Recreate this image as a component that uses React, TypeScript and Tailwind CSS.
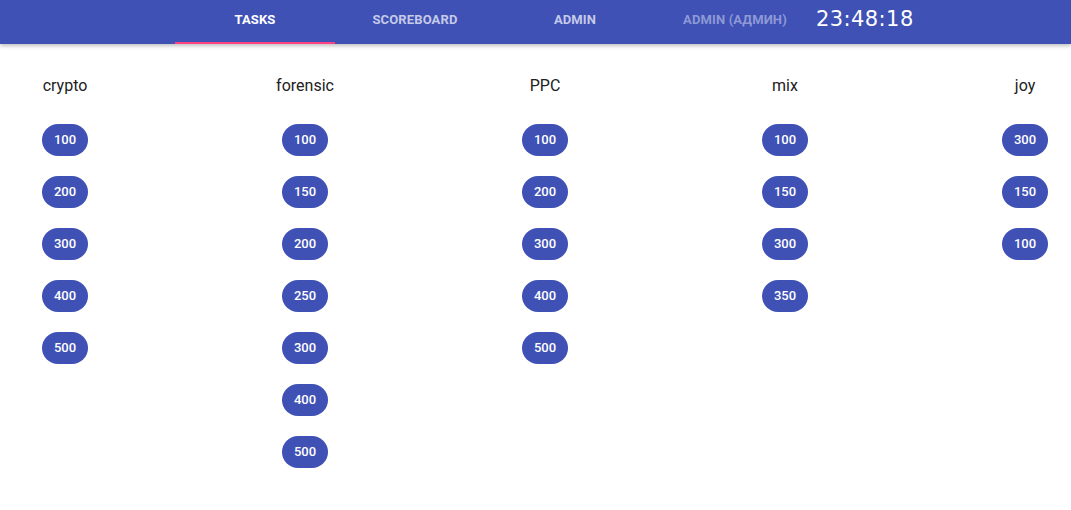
import React from 'react';

const CATEGORIES: { name: string; tasks: number[] }[] = [
  { name: 'crypto', tasks: [100, 200, 300, 400, 500] },
  { name: 'forensic', tasks: [100, 150, 200, 250, 300, 400, 500] },
  { name: 'PPC', tasks: [100, 200, 300, 400, 500] },
  { name: 'mix', tasks: [100, 150, 300, 350] },
  { name: 'joy', tasks: [300, 150, 100] },
];

const TABS = [
  { label: 'TASKS', active: true },
  { label: 'SCOREBOARD' },
  { label: 'ADMIN' },
  { label: 'ADMIN (АДМИН)', muted: true },
];

export default function App() {
  return (
    <div className="min-h-[510px] bg-white font-['Roboto',sans-serif]">
      <header className="h-[44px] bg-[#3f51b5] shadow-[0_2px_4px_rgba(0,0,0,0.25)] flex items-stretch pl-[175px]">
        {TABS.map((t) => (
          <div key={t.label} className="relative w-[160px] flex items-center justify-center pb-[4px]">
            <span
              className={`text-[13px] font-bold tracking-[0.01em] ${
                t.active ? 'text-white' : t.muted ? 'text-[#8e99d6]' : 'text-[#c5cae9]'
              }`}
            >
              {t.label}
            </span>
            {t.active && <div className="absolute left-0 right-0 bottom-0 h-[2px] bg-[#ff4081]" />}
          </div>
        ))}
        {/* clock */}
        <div className="flex items-center pb-[5px] pl-[1px] text-white text-[21px] leading-none font-['DejaVu_Sans',sans-serif] font-normal tracking-[0.02em]">
          23:48:18
        </div>
      </header>

      <main className="grid grid-cols-[repeat(5,46px)] gap-x-[194px] pl-[42px] pt-[30px] items-start">
        {CATEGORIES.map((c) => (
          <div key={c.name} className="flex flex-col items-center">
            <div className="h-[24px] leading-[24px] text-[16px] text-[#212121] whitespace-nowrap">{c.name}</div>
            <div className="flex flex-col gap-[20px] mt-[26px]">
              {c.tasks.map((p, i) => (
                <button
                  key={i}
                  className="w-[46px] h-[32px] rounded-full bg-[#3f51b5] text-white text-[13px] font-medium flex items-center justify-center"
                >
                  {p}
                </button>
              ))}
            </div>
          </div>
        ))}
      </main>
    </div>
  );
}
